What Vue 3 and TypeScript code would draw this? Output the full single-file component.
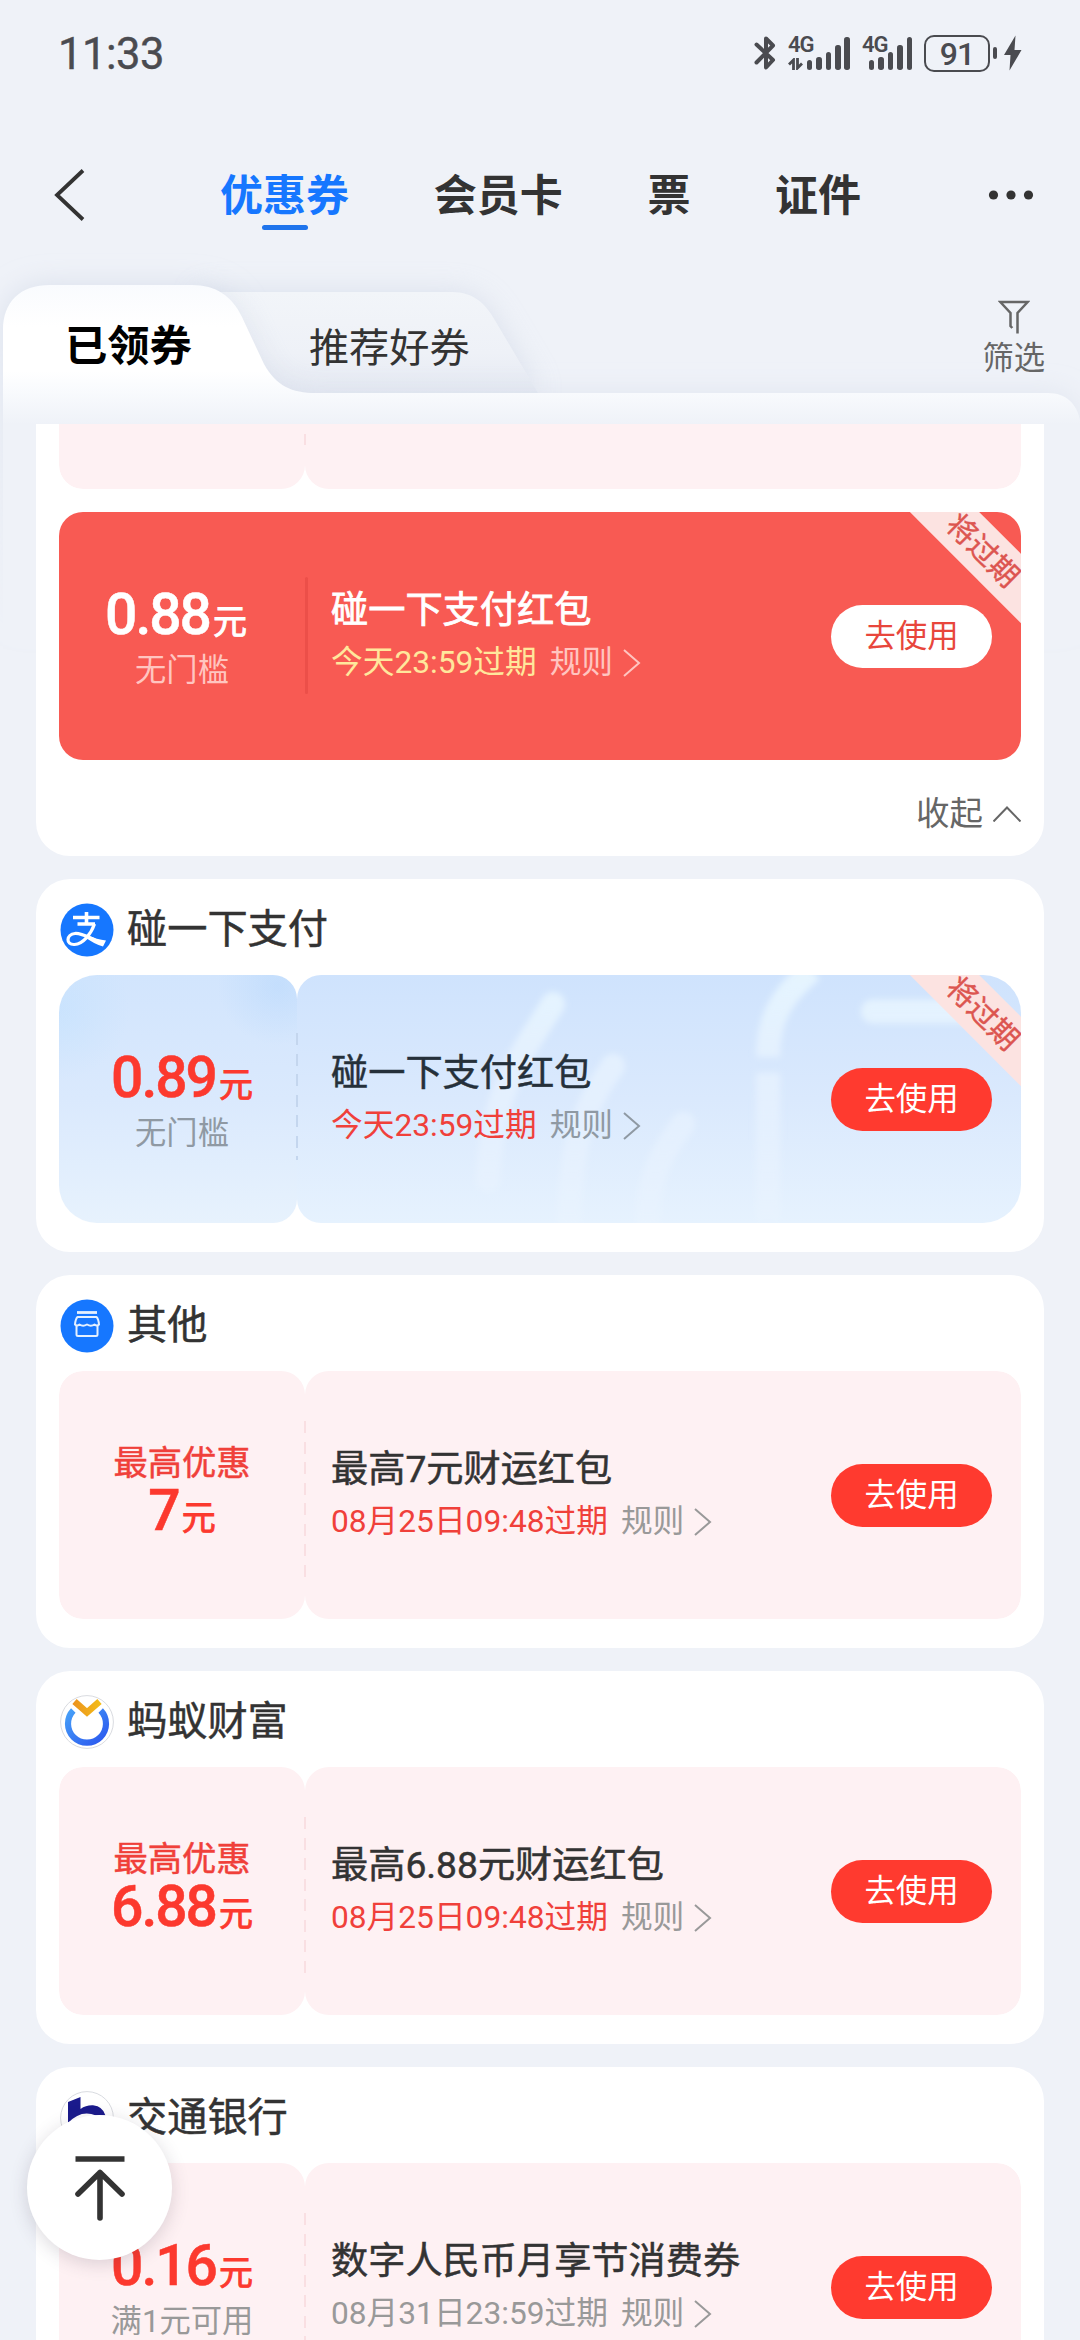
<script setup lang="ts">
type Theme = 'pink' | 'red' | 'blue'
type Logo = 'alipay' | 'shop' | 'fortune' | 'bocom'

interface Coupon {
  theme: Theme
  lead?: string
  amount: string
  condition?: string
  title: string
  expire: string
  urgent: boolean
  ribbon: boolean
}

interface Section {
  name: string
  logo: Logo
  coupon: Coupon
}

interface Group {
  logo?: Logo
  name?: string
  coupons: Coupon[]
  collapsible: boolean
}

const navTabs: string[] = ['优惠券', '会员卡', '票', '证件']
const barHeights: number[] = [10, 13.5, 18, 25, 33]

const first: Coupon = {
  theme: 'red',
  amount: '0.88',
  condition: '无门槛',
  title: '碰一下支付红包',
  expire: '今天23:59过期',
  urgent: true,
  ribbon: true,
}

const sections: Section[] = [
  {
    name: '碰一下支付',
    logo: 'alipay',
    coupon: { ...first, theme: 'blue', amount: '0.89' },
  },
  {
    name: '其他',
    logo: 'shop',
    coupon: {
      theme: 'pink',
      lead: '最高优惠',
      amount: '7',
      title: '最高7元财运红包',
      expire: '08月25日09:48过期',
      urgent: true,
      ribbon: false,
    },
  },
  {
    name: '蚂蚁财富',
    logo: 'fortune',
    coupon: {
      theme: 'pink',
      lead: '最高优惠',
      amount: '6.88',
      title: '最高6.88元财运红包',
      expire: '08月25日09:48过期',
      urgent: true,
      ribbon: false,
    },
  },
  {
    name: '交通银行',
    logo: 'bocom',
    coupon: {
      theme: 'pink',
      amount: '0.16',
      condition: '满1元可用',
      title: '数字人民币月享节消费券',
      expire: '08月31日23:59过期',
      urgent: false,
      ribbon: false,
    },
  },
]

const groups: Group[] = [
  { coupons: [first], collapsible: true },
  ...sections.map((s) => ({ logo: s.logo, name: s.name, coupons: [s.coupon], collapsible: false })),
]
</script>

<template>
  <div class="page">
    <header class="status">
      <span class="clock">11:33</span>
      <div class="status-icons">
        <svg class="bt" width="22" height="36" viewBox="0 0 22 36" fill="none" stroke="#4a4b50" stroke-width="4" stroke-linejoin="round" stroke-linecap="round">
          <path d="M2.5 9.5 L19 25 L12 32.500 V3.500 L19 10.500 L2.500 27.500" />
        </svg>
        <div class="signal first">
          <div class="net">
            <span class="net-label">4G</span>
            <svg width="15" height="12" viewBox="0 0 15 12" fill="none" stroke="#4a4b50" stroke-width="2.8">
              <path d="M5.500 12 V2 L1 6.500 M9.500 0 V10 L14 5.500" />
            </svg>
          </div>
          <div class="bars">
            <i v-for="h in barHeights" :key="h" :style="{ height: h + 'px' }"></i>
          </div>
        </div>
        <div class="signal second">
          <div class="net"><span class="net-label">4G</span></div>
          <div class="bars">
            <i v-for="h in barHeights" :key="h" :style="{ height: h + 'px' }"></i>
          </div>
        </div>
        <div class="battery"><span>91</span></div>
        <i class="nub"></i>
        <svg class="bolt" width="18" height="36" viewBox="0 0 18 36" fill="#4a4b50"><path d="M11.500 0.500 L0 20 H6.500 L5.500 35.500 L17.500 15 H10.500 Z" /></svg>
      </div>
    </header>

    <nav class="nav">
      <svg class="back" width="32" height="52" viewBox="0 0 32 52" fill="none" stroke="#333" stroke-width="3.800"><path d="M30 1.500 L4 26 L30 50.500" /></svg>
      <div class="nav-tabs">
        <span v-for="(t, i) in navTabs" :key="t" class="nav-tab" :class="{ on: i === 0 }">{{ t }}</span>
      </div>
      <svg class="more" width="46" height="12" viewBox="0 0 46 12" fill="#333"><circle cx="5.500" cy="6" r="4.600" /><circle cx="23" cy="6" r="4.600" /><circle cx="40.500" cy="6" r="4.600" /></svg>
    </nav>

    <div class="folder">
      <svg class="folder-shape" width="1080" height="424" viewBox="0 0 1080 424">
        <defs>
          <linearGradient id="sheet" gradientUnits="userSpaceOnUse" x1="0" y1="65" x2="0" y2="204">
            <stop offset="0" stop-color="#f9fbfe" />
            <stop offset="0.300" stop-color="#ffffff" />
            <stop offset="0.620" stop-color="#ffffff" />
            <stop offset="0.780" stop-color="#f8fafd" />
            <stop offset="1" stop-color="#eff2f8" />
          </linearGradient>
          <linearGradient id="rear" gradientUnits="userSpaceOnUse" x1="0" y1="72" x2="0" y2="173">
            <stop offset="0" stop-color="#f2f5f9" />
            <stop offset="0.600" stop-color="#eef1f7" />
            <stop offset="1" stop-color="#e6eaf3" />
          </linearGradient>
          <filter id="soft" x="-20%" y="-60%" width="140%" height="220%">
            <feGaussianBlur stdDeviation="14" />
          </filter>
          <clipPath id="rearClip"><path d="M200 72 H452 C474 72 486 84 496 102 L538 173 H200 Z" /></clipPath>
          <linearGradient id="fade" gradientUnits="userSpaceOnUse" x1="0" y1="60" x2="0" y2="420">
            <stop offset="0" stop-color="#c9d1e2" stop-opacity="0.600" />
            <stop offset="1" stop-color="#c9d1e2" stop-opacity="0" />
          </linearGradient>
        </defs>
        <path d="M200 72 H452 C474 72 486 84 496 102 L538 173 H200 Z" fill="#c9d1e2" opacity="0.550" filter="url(#soft)" />
        <path d="M3 424 V110 C3 82 20 65 50 65 H192 C216 65 232 76 242 97 L264 144 C276 166 292 173 316 173 H1048 C1066 173 1077 184 1080 200 V424 Z" fill="url(#fade)" filter="url(#soft)" />
        <path d="M200 72 H452 C474 72 486 84 496 102 L538 173 H200 Z" fill="url(#rear)" />
        <g clip-path="url(#rearClip)">
          <path d="M3 220 V110 C3 82 20 65 50 65 H192 C216 65 232 76 242 97 L264 144 C276 166 292 173 316 173 H1080 V220 Z" fill="#c9d1e2" opacity="0.420" filter="url(#soft)" />
        </g>
        <path d="M3 204 V110 C3 82 20 65 50 65 H192 C216 65 232 76 242 97 L264 144 C276 166 292 173 316 173 H1048 C1066 173 1077 184 1080 200 V204 Z" fill="url(#sheet)" />
        <rect x="3" y="204" width="1077" height="220" fill="#eff2f8" />
      </svg>
      <span class="ftab active">已领券</span>
      <span class="ftab">推荐好券</span>
      <div class="filter">
        <svg width="32" height="36" viewBox="0 0 32 36" fill="none" stroke="#666" stroke-width="2.500"><path d="M14.300 29 L12.500 27 V14 L2.300 3 H29.700 L19.500 14 V34.500" /></svg>
        <span>筛选</span>
      </div>
    </div>

    <main class="list">
      <section v-for="(g, gi) in groups" :key="gi" class="card" :class="{ cut: g.collapsible }">
        <div v-if="g.collapsible" class="coupon pink sliver">
          <div class="stub"></div>
          <div class="body"></div>
          <i class="dash"></i>
        </div>
        <div v-if="g.name" class="card-head">
          <svg v-if="g.logo === 'alipay'" class="logo" width="54" height="54" viewBox="0 0 54 54" fill="none" stroke="#fff">
            <circle cx="27" cy="27" r="26.500" fill="#1677ff" stroke="none" />
            <path d="M26.500 9 V20 M13 14.500 H39.500 M17.500 21 H35" stroke-width="3.600" />
            <path d="M34.500 21 C31 31 23 41 14.500 41.500 C5.500 42 6 31.500 15 30.500 C21 30 29 34.500 35 37" stroke-width="3.200" />
            <path d="M27 32 C34 35 40 37 46 37.500 L43 43.500 C37 42 31 38.500 26 35 Z" fill="#fff" stroke="none" />
          </svg>
          <svg v-else-if="g.logo === 'shop'" class="logo" width="54" height="54" viewBox="0 0 54 54" fill="none" stroke="#e4f0ff" stroke-width="2">
            <circle cx="27" cy="27" r="26.500" fill="#1677ff" stroke="none" />
            <path d="M17 13.500 H37" stroke-width="2.800" />
            <path d="M17.500 18 H36.500 Q38.500 20 39 25.500 Q37 27.500 34.500 25.500 Q31 27.800 27 25.500 Q23 27.800 19.500 25.500 Q17 27.500 15 25.500 Q15.500 20 17.500 18 Z" stroke-linejoin="round" />
            <path d="M16.500 26.500 V35.500 Q16.500 37 18 37 H36 Q37.500 37 37.500 35.500 V26.500" stroke-linejoin="round" />
          </svg>
          <svg v-else-if="g.logo === 'fortune'" class="logo" width="54" height="54" viewBox="0 0 54 54" fill="none">
            <defs>
              <linearGradient id="ring" x1="0" y1="0" x2="1" y2="1"><stop offset="0" stop-color="#47a0f8" /><stop offset="1" stop-color="#2a56ee" /></linearGradient>
              <linearGradient id="vee" x1="0" y1="0" x2="1" y2="0"><stop offset="0" stop-color="#ec951f" /><stop offset="1" stop-color="#f3bb18" /></linearGradient>
            </defs>
            <circle cx="27" cy="27" r="26.400" fill="#fff" stroke="#d9dbe0" />
            <path d="M13.300 15.500 A19 19 0 1 0 40.700 15.500" stroke="url(#ring)" stroke-width="6.200" />
            <path d="M14.500 6.500 L27 17.500 L39.500 6.500" stroke="url(#vee)" stroke-width="6.500" />
          </svg>
          <svg v-else class="logo" width="54" height="54" viewBox="0 0 54 54">
            <circle cx="27" cy="27" r="26.400" fill="#fff" stroke="#d9dbe0" />
            <path d="M8 11 L20.500 6 V18 Q26 14 33 14.300 Q43 15.500 45.500 24.500 L36 24.500 Q21 18 8 32 Z" fill="#1a1a8c" />
          </svg>
          <h2>{{ g.name }}</h2>
        </div>

        <div v-for="c in g.coupons" :key="c.title" class="coupon" :class="c.theme">
          <div class="stub">
            <span v-if="c.lead" class="lead">{{ c.lead }}</span>
            <span class="amount" :class="{ small: c.lead }">{{ c.amount }}<em>元</em></span>
            <span v-if="c.condition" class="cond">{{ c.condition }}</span>
          </div>
          <div class="body">
            <svg v-if="c.theme === 'blue'" class="waves" width="724" height="248" viewBox="297 975 724 248">
              <defs>
                <filter id="waveBlur"><feGaussianBlur stdDeviation="3" /></filter>
                <linearGradient id="waveFade" gradientUnits="userSpaceOnUse" x1="0" y1="985" x2="0" y2="1215">
                  <stop offset="0" stop-color="#e9f7ff" stop-opacity="0.850" />
                  <stop offset="0.500" stop-color="#ebf4ff" stop-opacity="0.600" />
                  <stop offset="1" stop-color="#edf5ff" stop-opacity="0.300" />
                </linearGradient>
              </defs>
              <g filter="url(#waveBlur)" stroke="url(#waveFade)" fill="none" stroke-width="24">
                <path d="M553 1004 C525 1050 492 1085 488 1180" stroke-linecap="round" />
                <path d="M613 1066 C588 1102 572 1130 569 1218" stroke-linecap="round" />
                <path d="M683 1124 C664 1150 648 1175 648 1218" stroke-linecap="round" />
                <path d="M768 1073 V1220" />
                <path d="M768 1057 C768 1018 782 995 812 970" />
                <path d="M873 1011.500 H980 V1012" stroke-linecap="round" />
              </g>
            </svg>
            <div class="info">
              <h3>{{ c.title }}</h3>
              <p>
                <span class="expire" :class="{ urgent: c.urgent }">{{ c.expire }}</span>
                <span class="rule">规则</span>
                <svg class="chev" width="18" height="28" viewBox="0 0 18 28" fill="none" stroke="currentColor" stroke-width="2"><path d="M1 1 L16 14 L1 27" /></svg>
              </p>
            </div>
            <button class="use" type="button">去使用</button>
          </div>
          <i class="dash"></i>
          <div v-if="c.ribbon" class="ribbon">将过期</div>
        </div>

        <div v-if="g.collapsible" class="collapse">
          <span>收起</span>
          <svg width="28" height="16" viewBox="0 0 28 16" fill="none" stroke="#666" stroke-width="2"><path d="M0.500 15.500 L14 1.500 L27.500 15.500" /></svg>
        </div>
      </section>
    </main>

    <button class="to-top" type="button">
      <svg width="54" height="70" viewBox="0 0 54 70" fill="none" stroke="#333" stroke-width="5.600"><path d="M2.500 6 H51.500" /><path d="M5 41 L27 19.500 L49 41 M27 19.500 V65" stroke-linecap="round" stroke-linejoin="round" /></svg>
    </button>
  </div>
</template>

<style>
body {
  background: #eff2f8;
}
</style>

<style scoped>
.page {
  position: relative;
  width: 1080px;
  height: 2340px;
  overflow: hidden;
  display: flex;
  flex-direction: column;
  background: #eff2f8;
  color: #333;
  font-family: Roboto, 'Noto Sans CJK SC', sans-serif;
}
h2, h3, p { margin: 0; }
button { border: 0; padding: 0; font-family: inherit; }

.status {
  height: 108px;
  flex: none;
  display: flex;
  justify-content: space-between;
  padding: 0 58px;
  color: #4a4b50;
}
.clock {
  margin-top: 29px;
  font-size: 43.500px;
  line-height: 52px;
  font-weight: 400;
  letter-spacing: -0.500px;
  -webkit-text-stroke: 0.400px currentColor;
}
.status-icons { display: flex; align-items: flex-start; margin-top: 35px; }
.bt { margin-right: 12px; }
.signal { display: flex; height: 35px; }
.signal.first { margin-right: 12px; }
.signal.second { margin-right: 12px; }
.net { width: 19px; display: flex; flex-direction: column; justify-content: space-between; }
.net-label { font-size: 22px; line-height: 20px; font-weight: 600; letter-spacing: -1px; white-space: nowrap; }
.signal.second .net { width: 7px; }
.bars { display: flex; align-items: flex-end; gap: 3.900px; }
.bars i { width: 5.500px; border-radius: 2.700px; background: #4a4b50; }
.battery {
  width: 66px;
  height: 37px;
  box-sizing: border-box;
  border: 2.500px solid #4a4b50;
  border-radius: 10px;
  display: flex;
  justify-content: center;
  align-items: center;
  font-size: 32px;
  line-height: 32px;
  font-weight: 500;
  letter-spacing: -1px;
}
.nub { width: 4px; height: 12px; margin: 12px 7px 0 3px; border-radius: 2px; background: #4a4b50; }

.nav {
  height: 82px;
  flex: none;
  display: flex;
  align-items: flex-start;
  padding: 30px 46px 0 53px;
}
.back { margin-top: 30.500px; }
.more { margin-top: 50.500px; margin-left: auto; }
.nav-tabs { display: flex; margin-left: 135px; }
.nav-tab {
  position: relative;
  margin-top: 30px;
  margin-right: 84.700px;
  font-size: 43px;
  line-height: 56px;
  font-weight: 700;
  white-space: nowrap;
}
.nav-tab.on { color: #1677ff; }
.nav-tab.on::after {
  content: '';
  position: absolute;
  left: 42px;
  top: 57px;
  width: 46px;
  height: 5px;
  border-radius: 2.500px;
  background: #1f74ec;
}

.folder {
  position: relative;
  height: 204px;
  flex: none;
  display: flex;
  align-items: flex-start;
  padding: 0 35px 0 65px;
}
.folder-shape { position: absolute; left: 0; top: 0; overflow: visible; }
.ftab { position: relative; margin-top: 103px; font-size: 40.200px; line-height: 52px; white-space: nowrap; }
.ftab.active { font-size: 42.300px; font-weight: 700; color: #000; margin-right: 117px; margin-top: 101px; }
.filter {
  position: relative;
  margin-left: auto;
  margin-top: 79px;
  display: flex;
  flex-direction: column;
  align-items: center;
  font-size: 31.300px;
  line-height: 40px;
  color: #666;
}
.filter span { margin-top: 4px; }

.list {
  position: relative;
  display: flex;
  flex-direction: column;
  gap: 23px;
  padding: 0 36px;
}
.card {
  height: 373px;
  flex: none;
  box-sizing: border-box;
  padding: 0 23px 29px;
  border-radius: 34px;
  background: #fff;
}
.card.cut { height: 432px; border-radius: 0 0 34px 34px; }
.card-head { height: 96px; display: flex; align-items: center; box-sizing: border-box; padding: 6px 0 0 1px; }
.card-head h2 { margin-left: 13px; margin-top: -1px; font-size: 40.200px; line-height: 50px; font-weight: 400; -webkit-text-stroke: 0.500px #333; }

.coupon {
  position: relative;
  display: flex;
  height: 248px;
  border-radius: 24px;
  overflow: hidden;
}
.stub {
  width: 246px;
  flex: none;
  box-sizing: border-box;
  padding-top: 73px;
  display: flex;
  flex-direction: column;
  align-items: center;
  background: #fef1f3;
  border-radius: 24px;
}
.body {
  position: relative;
  flex: 1;
  display: flex;
  align-items: center;
  justify-content: space-between;
  padding: 0 29px 0 26px;
  background: #fef1f3;
  border-radius: 24px;
}
.dash {
  position: absolute;
  left: 245px;
  top: 50px;
  width: 2px;
  height: 156px;
  background: repeating-linear-gradient(#f9dfe2 0 12px, transparent 12px 20.500px);
}
.sliver { height: 65px; margin-bottom: 23px; border-radius: 0 0 24px 24px; }
.sliver .stub, .sliver .body { border-radius: 0 0 24px 24px; }
.sliver .stub { padding: 0; }
.sliver .dash { top: 10px; height: 11px; }

.lead { font-size: 34.300px; line-height: 38px; color: #f0403a; -webkit-text-stroke: 0.500px #f0403a; }
.amount { font-size: 57px; line-height: 60px; font-weight: 500; color: #fc392e; letter-spacing: -2px; white-space: nowrap; -webkit-text-stroke: 0.500px currentColor; }
.amount.small { line-height: 58px; }
.amount em { font-style: normal; font-size: 34px; font-weight: 400; letter-spacing: 0; margin-left: 3px; -webkit-text-stroke: 0.900px currentColor; }
.cond { font-size: 31.300px; line-height: 38px; color: #999; }

.info { position: relative; }
.info h3 { font-size: 37.200px; line-height: 46px; font-weight: 400; -webkit-text-stroke: 0.500px currentColor; white-space: nowrap; }
.info p { display: flex; align-items: center; height: 40px; margin-top: 10px; margin-bottom: 3px; font-size: 31.700px; line-height: 40px; white-space: nowrap; }
.expire { color: #999; }
.expire.urgent { color: #f0403a; }
.rule { margin-left: 13px; color: #999; }
.chev { margin-left: 10px; color: #999; }

.use {
  position: relative;
  width: 161px;
  height: 63px;
  border-radius: 32px;
  background: #ff3a2f;
  color: #fff;
  font-size: 31.400px;
  line-height: 63px;
  text-align: center;
}

.red { background: #f85a53; }
.red .stub, .red .body { background: none; }
.red .amount { color: #fff; margin-right: 12px; }
.red .cond, .red .rule, .red .chev { color: #ffc5c0; }
.red .info h3 { color: #fff; -webkit-text-stroke: 0.800px #fff; }
.red .expire.urgent { color: #ffe79c; }
.red .use { background: #fff; color: #e8463c; }
.red .dash { left: 246px; top: 65px; width: 3px; height: 117px; border-radius: 2px; background: #ec4f49; }

.blue { border-radius: 38px; }
.blue .stub {
  width: 238px;
  padding-left: 8px;
  background:
    radial-gradient(circle at 0 14%, rgba(190, 224, 254, 0.450), transparent 70px),
    radial-gradient(circle at 92% 4%, rgba(184, 216, 252, 0.550), transparent 60px),
    linear-gradient(#d2e5fd, #dae9fd 50%, #e7f2fd);
}
.blue .body { padding-left: 34px; background: linear-gradient(#cfe3fd, #dae9fd 50%, #e6f2fe); overflow: hidden; }
.blue .info h3 { color: #25303a; }
.blue .dash { left: 237px; top: 58px; height: 127px; background: repeating-linear-gradient(#c4d6ee 0 12px, transparent 12px 20.500px); }
.blue .cond, .blue .rule, .blue .chev { color: #8f99a3; }
.waves { position: absolute; left: 0; top: 0; }

.ribbon {
  position: absolute;
  width: 240px;
  height: 49px;
  right: -81.700px;
  top: 13.800px;
  transform: rotate(45deg);
  background: #fce3e1;
  color: #dc5550;
  font-size: 29.500px;
  line-height: 50px;
  text-align: center;
  -webkit-text-stroke: 0.400px currentColor;
}

.collapse { height: 96px; display: flex; align-items: center; justify-content: flex-end; gap: 10px; font-size: 33.500px; color: #666; padding-top: 6px; }
.collapse span { line-height: 44px; }

.to-top {
  position: absolute;
  left: 27px;
  top: 2115px;
  width: 145px;
  height: 145px;
  border-radius: 50%;
  background: #fff;
  box-shadow: 0 4px 18px rgba(60, 50, 70, 0.180);
  display: flex;
  align-items: center;
  justify-content: center;
}
</style>
